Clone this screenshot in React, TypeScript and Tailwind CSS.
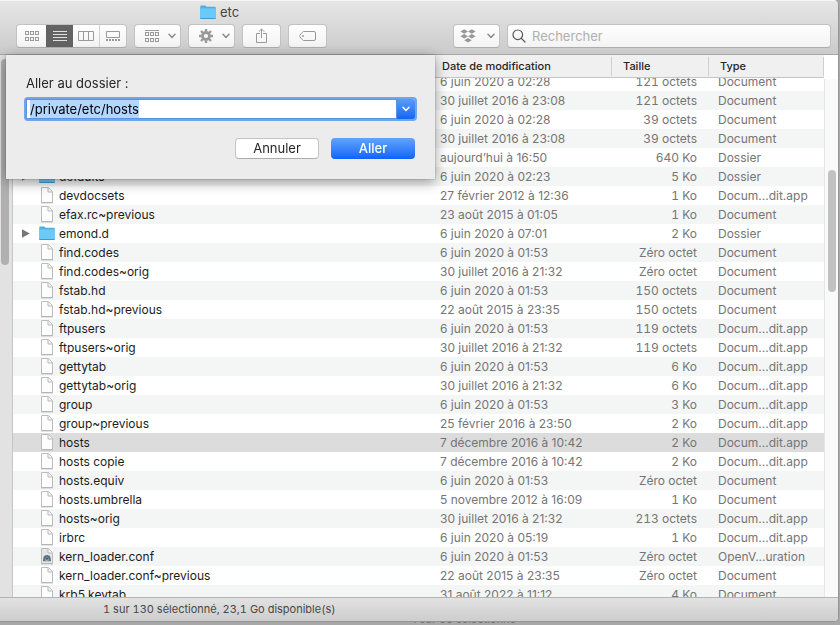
import { useEffect, useRef, useState } from "react";
import type { ReactNode } from "react";
import clsx from "clsx";

type Kind = "doc" | "folder" | "vpn";

interface Entry {
  name: string;
  date: string;
  size: string;
  type: string;
  kind?: Kind;
}

const entries: Entry[] = [
  { name: "", date: "6 juin 2020 à 02:28", size: "121 octets", type: "Document" },
  { name: "", date: "30 juillet 2016 à 23:08", size: "121 octets", type: "Document" },
  { name: "", date: "6 juin 2020 à 02:28", size: "39 octets", type: "Document" },
  { name: "", date: "30 juillet 2016 à 23:08", size: "39 octets", type: "Document" },
  { name: "", date: "aujourd’hui à 16:50", size: "640 Ko", type: "Dossier", kind: "folder" },
  { name: "defaults", date: "6 juin 2020 à 02:23", size: "5 Ko", type: "Dossier", kind: "folder" },
  { name: "devdocsets", date: "27 février 2012 à 12:36", size: "1 Ko", type: "Docum...dit.app" },
  { name: "efax.rc~previous", date: "23 août 2015 à 01:05", size: "1 Ko", type: "Document" },
  { name: "emond.d", date: "6 juin 2020 à 07:01", size: "2 Ko", type: "Dossier", kind: "folder" },
  { name: "find.codes", date: "6 juin 2020 à 01:53", size: "Zéro octet", type: "Document" },
  { name: "find.codes~orig", date: "30 juillet 2016 à 21:32", size: "Zéro octet", type: "Document" },
  { name: "fstab.hd", date: "6 juin 2020 à 01:53", size: "150 octets", type: "Document" },
  { name: "fstab.hd~previous", date: "22 août 2015 à 23:35", size: "150 octets", type: "Document" },
  { name: "ftpusers", date: "6 juin 2020 à 01:53", size: "119 octets", type: "Docum...dit.app" },
  { name: "ftpusers~orig", date: "30 juillet 2016 à 21:32", size: "119 octets", type: "Docum...dit.app" },
  { name: "gettytab", date: "6 juin 2020 à 01:53", size: "6 Ko", type: "Docum...dit.app" },
  { name: "gettytab~orig", date: "30 juillet 2016 à 21:32", size: "6 Ko", type: "Docum...dit.app" },
  { name: "group", date: "6 juin 2020 à 01:53", size: "3 Ko", type: "Docum...dit.app" },
  { name: "group~previous", date: "25 février 2016 à 23:50", size: "2 Ko", type: "Docum...dit.app" },
  { name: "hosts", date: "7 décembre 2016 à 10:42", size: "2 Ko", type: "Docum...dit.app" },
  { name: "hosts copie", date: "7 décembre 2016 à 10:42", size: "2 Ko", type: "Docum...dit.app" },
  { name: "hosts.equiv", date: "6 juin 2020 à 01:53", size: "Zéro octet", type: "Document" },
  { name: "hosts.umbrella", date: "5 novembre 2012 à 16:09", size: "1 Ko", type: "Document" },
  { name: "hosts~orig", date: "30 juillet 2016 à 21:32", size: "213 octets", type: "Docum...dit.app" },
  { name: "irbrc", date: "6 juin 2020 à 05:19", size: "1 Ko", type: "Docum...dit.app" },
  { name: "kern_loader.conf", date: "6 juin 2020 à 01:53", size: "Zéro octet", type: "OpenV...uration", kind: "vpn" },
  { name: "kern_loader.conf~previous", date: "22 août 2015 à 23:35", size: "Zéro octet", type: "Document" },
  { name: "krb5.keytab", date: "31 août 2022 à 11:12", size: "4 Ko", type: "Document" },
];

function FolderIcon() {
  return (
    <svg width="16" height="15" viewBox="0 0 16 15" className="shrink-0">
      <path d="M0.3 13V1.3Q0.3 0.5 1.1 0.5H5.2L6.6 1.8H14.9Q15.7 1.8 15.7 2.6V13Z" fill="#4fb0dc" />
      <rect x="0.3" y="3" width="15.4" height="10.8" rx="0.5" fill="#6ccaf8" />
      <path d="M0.3 3.5H15.7" stroke="#5fc0ee" />
      <path d="M0.3 13.5H15.7" stroke="#3d9dc9" />
    </svg>
  );
}

function DocIcon({ vpn = false }: { vpn?: boolean }) {
  return (
    <svg width="16" height="17" viewBox="0 0 16 17" className="shrink-0">
      <path d="M2.5 0.5H9.5L13.5 4.5V15.5H2.5Z" fill={vpn ? "#e4e6e8" : "#fdfdfd"} stroke="#bcbcbc" />
      <path d="M9 0.5V5H13.5" fill="#f4f4f4" stroke="#b9b9b9" />
      <path d="M2 16H14" stroke="#a5a5a5" strokeWidth="0.6" />
      {vpn && (
        <>
          <path d="M4 13.2L4.4 9.8A3.7 3.7 0 0 1 11.6 9.8L12 13.2H9.6L9.2 10.4A1.3 1.3 0 0 0 6.8 10.4L6.4 13.2Z" fill="#5d7183" />
          <circle cx="8" cy="10.8" r="1.1" fill="#3f5161" />
          <path d="M6 12.8H10" stroke="#7f909d" />
        </>
      )}
    </svg>
  );
}

function Chevron({ className = "text-[#8c8c8c]" }: { className?: string }) {
  return (
    <svg width="8" height="6" viewBox="0 0 8 6" fill="none" className={className}>
      <path d="M1 1.2L4 4.4L7 1.2" stroke="currentColor" strokeWidth="1.5" strokeLinecap="round" strokeLinejoin="round" />
    </svg>
  );
}

function GridSquares({ top = 0 }: { top?: number }) {
  return (
    <g fill="none" stroke="currentColor">
      {[0, 6].map((y) =>
        [0, 5, 10].map((x) => <rect key={`${x}-${y}`} x={x + 0.5} y={y + top + 0.5} width="3" height="3" />)
      )}
    </g>
  );
}

const toolButton =
  "flex h-6 items-center justify-center rounded-[4px] border border-[#c2c2c2] border-b-[#adadad] bg-linear-to-b from-white to-[#f3f3f3] text-[#999]";

function ToolButton({ label, menu, className, children }: { label: string; menu?: boolean; className: string; children: ReactNode }) {
  return (
    <button type="button" aria-label={label} className={clsx(toolButton, menu && "pr-1", className)}>
      {children}
      {menu && <Chevron className="ml-auto text-[#8c8c8c]" />}
    </button>
  );
}

function Toolbar() {
  const [query, setQuery] = useState("");
  return (
    <header className="h-[55px] border-t border-b border-t-[#f6f6f6] border-b-[#a6a6a6] bg-linear-to-b from-[#e6e6e6] to-[#cbcbcb]">
      <div className="flex h-[23px] items-center gap-1 pl-[200px] text-[13px] text-[#454545]">
        <FolderIcon />
        <span>etc</span>
      </div>
      <div className="flex items-center gap-[7px] pr-[7px] pl-4">
        <div className={clsx(toolButton, "overflow-hidden")}>
          <button type="button" aria-label="Icônes" className="flex h-full w-[29px] items-center justify-center">
            <svg width="14" height="10" viewBox="0 0 14 10"><GridSquares /></svg>
          </button>
          <button type="button" aria-label="Liste" className="flex h-6 w-[27px] shrink-0 items-center justify-center bg-[#636363] text-[#e0e0e0]">
            <svg width="14" height="10" viewBox="0 0 14 10" stroke="currentColor"><path d="M0 0.5H14M0 3.5H14M0 6.5H14M0 9.5H14" /></svg>
          </button>
          <button type="button" aria-label="Colonnes" className="flex h-full w-[27px] items-center justify-center border-r border-[#d2d2d2]">
            <svg width="16" height="10" viewBox="0 0 16 10" fill="none" stroke="currentColor"><path d="M0.5 0.5H15.5V9.5H0.5ZM5.5 0.5V9.5M10.5 0.5V9.5" /></svg>
          </button>
          <button type="button" aria-label="Galerie" className="flex h-full w-[26px] items-center justify-center">
            <svg width="14" height="10" viewBox="0 0 14 10" fill="none" stroke="currentColor">
              <path d="M0.5 0.5H13.5V6.5H0.5Z" />
              <path d="M0 9H14" strokeWidth="2" strokeDasharray="2 1" />
            </svg>
          </button>
        </div>
        <ToolButton label="Grouper" menu className="w-[47px] pl-2.5">
          <svg width="14" height="13" viewBox="0 0 14 13" className="shrink-0">
            <path d="M0 0.5H14" stroke="currentColor" />
            <GridSquares top={2} />
          </svg>
        </ToolButton>
        <ToolButton label="Actions" menu className="w-[47px] pl-2.5">
          <svg width="14" height="14" viewBox="0 0 14 14" fill="none" stroke="currentColor" className="shrink-0">
            <circle cx="7" cy="7" r="3.5" strokeWidth="2.8" />
            <path d="M7 0V2.5M7 11.5V14M0 7H2.5M11.5 7H14M2 2L4 4M10 10L12 12M12 2L10 4M4 10L2 12" strokeWidth="2.4" />
          </svg>
        </ToolButton>
        <ToolButton label="Partager" className="w-[39px]">
          <svg width="11" height="16" viewBox="0 0 11 16" fill="none" stroke="currentColor">
            <path d="M4 5.5H0.5V14.5H10.5V5.5H7M5.5 10V1.2M2.8 3.7L5.5 1L8.2 3.7" />
          </svg>
        </ToolButton>
        <ToolButton label="Tags" className="w-[39px]">
          <svg width="17" height="10" viewBox="0 0 17 10" fill="none" stroke="currentColor">
            <path d="M4.5 0.5H15Q16.5 0.5 16.5 2V8Q16.5 9.5 15 9.5H4.5Q3.6 9.5 0.7 5.5Q0.4 5 0.7 4.5Q3.6 0.5 4.5 0.5Z" />
            <circle cx="4" cy="5" r="0.6" />
          </svg>
        </ToolButton>
        <ToolButton label="Dropbox" menu className="ml-[119px] w-[47px] pl-1.5">
          <svg width="16" height="14" viewBox="0 0 16 14" fill="currentColor" className="shrink-0">
            <path d="M4.2 0.2L8 2.5L4.2 4.8L0.4 2.5ZM11.8 0.2L15.6 2.5L11.8 4.8L8 2.5ZM4.2 5L8 7.3L4.2 9.6L0.4 7.3ZM11.8 5L15.6 7.3L11.8 9.6L8 7.3ZM8 9L11.8 11.3L8 13.6L4.2 11.3Z" />
          </svg>
        </ToolButton>
        <label className={clsx(toolButton, "flex-1 gap-1.5 px-1")}>
          <svg width="14" height="14" viewBox="0 0 14 14" fill="none" stroke="#555" strokeWidth="1.2" strokeLinecap="round">
            <circle cx="5.8" cy="5.8" r="4.8" />
            <path d="M9.4 9.4L13 13" />
          </svg>
          <input
            type="text"
            aria-label="Rechercher"
            placeholder="Rechercher"
            value={query}
            onChange={(e) => setQuery(e.target.value)}
            className="h-full min-w-0 flex-1 bg-transparent text-[13px] leading-[22px] text-black outline-none placeholder:text-[#b0b0b0]"
          />
        </label>
      </div>
    </header>
  );
}

function FileList() {
  const listRef = useRef<HTMLDivElement>(null);
  const [selected, setSelected] = useState("hosts");

  // The list opens a few pixels down, under its sticky header
  useEffect(() => {
    if (listRef.current) listRef.current.scrollTop = 6;
  }, []);

  return (
    <div ref={listRef} className="min-w-0 flex-1 overflow-hidden bg-white">
      <table className="w-full table-fixed border-separate border-spacing-0 text-xs leading-[19px]">
        <thead className="sticky top-0 z-10 text-left text-[11px] text-[#262626]">
          <tr className="h-[23px] *:border-b *:border-[#c4c4c4] *:bg-[#f0f0f0] *:p-0 *:font-medium">
            <th />
            <th className="w-[176px]"><div className="border-r border-[#cfcfcf] pl-1.5">Date de modification</div></th>
            <th className="w-[97px]"><div className="border-r border-[#cfcfcf] pl-[11px]">Taille</div></th>
            <th className="w-[115px]"><div className="border-r border-[#cfcfcf] pl-[11px]">Type</div></th>
          </tr>
        </thead>
        <tbody className="text-[#757575]">
          {entries.map((entry, i) => (
            <tr
              key={i}
              onClick={() => setSelected(entry.name)}
              className={clsx(
                "h-[19px] *:p-0 *:whitespace-nowrap",
                entry.name === selected ? "bg-[#dcdcdc]" : "even:bg-[#f4f5f5]"
              )}
            >
              <td>
                <div className="flex h-[19px] items-center text-[#1c1c1c]">
                  <span className="w-[26px] pl-2">
                    {entry.kind === "folder" && (
                      <svg width="9" height="9" viewBox="0 0 9 9"><path d="M1 0.2L8.8 4.5L1 8.8Z" fill="#777" /></svg>
                    )}
                  </span>
                  {entry.kind === "folder" ? <FolderIcon /> : <DocIcon vpn={entry.kind === "vpn"} />}
                  <span className="pl-1">{entry.name}</span>
                </div>
              </td>
              <td><div className="pl-1">{entry.date}</div></td>
              <td><div className="pr-3 text-right tabular-nums">{entry.size}</div></td>
              <td><div className="pl-[9px]">{entry.type}</div></td>
            </tr>
          ))}
        </tbody>
      </table>
    </div>
  );
}

function GoToFolderSheet() {
  const inputRef = useRef<HTMLInputElement>(null);

  useEffect(() => {
    inputRef.current?.focus();
    inputRef.current?.select();
  }, []);

  return (
    <form
      onSubmit={(e) => e.preventDefault()}
      className="absolute top-0 left-1.5 z-20 w-[429px] bg-[#ececec] p-5 text-[13px] text-[#262626] shadow-[0_3px_12px_rgba(0,0,0,0.4),0_0_1px_rgba(0,0,0,0.5)]"
    >
      <label htmlFor="path" className="block leading-4">Aller au dossier :</label>
      <div className="mt-2 flex h-5 rounded-[2px] bg-white ring-2 ring-[#6ea6ee]">
        <input
          id="path"
          ref={inputRef}
          type="text"
          defaultValue="/private/etc/hosts"
          className="min-w-0 flex-1 border border-[#5a92dc] pl-[3px] leading-[18px] text-black outline-none selection:bg-[#b3d7ff] selection:text-black"
        />
        <button type="button" aria-label="Dossiers récents" className="flex w-[18px] items-center justify-center rounded-r-[2px] bg-linear-to-b from-[#5b9bf8] to-[#0f65f4]">
          <Chevron className="text-white" />
        </button>
      </div>
      <div className="mt-[19px] flex justify-end gap-3">
        <button type="button" className="h-[21px] w-[84px] rounded-[4px] border border-[#c4c4c4] border-b-[#adadad] bg-white">Annuler</button>
        <button type="submit" className="h-[21px] w-[84px] rounded-[4px] bg-linear-to-b from-[#63a3fb] to-[#0a63fb] font-medium text-white">Aller</button>
      </div>
    </form>
  );
}

export default function App() {
  return (
    <div className="flex h-screen flex-col overflow-hidden bg-[#a8a8a8] font-[Inter,sans-serif]">
      <div className="mr-px flex min-h-0 flex-1 flex-col overflow-hidden rounded-tr-[5px] rounded-br-[5px] border-r border-b border-[#959595] bg-[#e4e4e4]">
        <Toolbar />
        <main className="relative flex min-h-0 flex-1">
          <aside className="w-[13px] border-r border-[#c6c6c6] bg-[#e2e2e2] pt-1 pl-px">
            <div className="h-[206px] w-2 rounded-full bg-[#b0b0b0]" />
          </aside>
          <FileList />
          <div className="w-[14px] bg-white pt-6">
            <div className="h-full border-l border-[#e6e6e6] bg-[#fafafa] pt-[91px] pl-[3px]">
              <div className="h-[122px] w-2 rounded-full bg-[#c1c1c1]" />
            </div>
          </div>
          <GoToFolderSheet />
        </main>
        <footer className="h-6 border-t border-[#b4b4b4] bg-linear-to-b from-[#e2e2e2] to-[#cdcdcd] pl-[103px] text-[11px] leading-[23px] text-[#484848] tabular-nums">
          1 sur 130 sélectionné, 23,1 Go disponible(s)
        </footer>
      </div>
      <div className="flex h-[3px] shrink-0 items-end overflow-hidden pl-[412px] text-[11px] leading-3 text-[#707070]">
        <span>1 sur 60 sélectionné</span>
      </div>
    </div>
  );
}
